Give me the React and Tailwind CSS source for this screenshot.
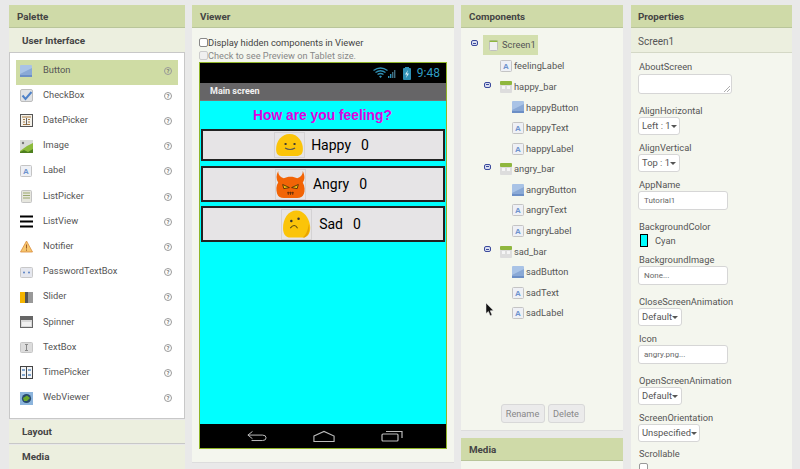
const paletteItems = ['Button', 'CheckBox', 'DatePicker', 'Image', 'Label', 'ListPicker', 'ListView', 'Notifier', 'PasswordTextBox', 'Slider', 'Spinner', 'TextBox', 'TimePicker', 'WebViewer'];

function PaletteIcon({ name }) {
  switch (name) {
    case 'Button':
      return <ButtonIcon />;
    case 'CheckBox':
      return (
        <svg width="13" height="13" viewBox="0 0 13 13">
          <rect x="0.5" y="0.5" width="12" height="12" rx="1.5" fill="#e0e2e4" stroke="#bcbcbc" />
          <path d="M2.5 6.5 L5.5 10 L11.5 3" fill="none" stroke="#4f82c8" strokeWidth="2" />
        </svg>
      );
    case 'DatePicker':
      return (
        <svg width="13" height="13" viewBox="0 0 13 13">
          <rect x="0.5" y="0.5" width="12" height="12" fill="#f4f1ea" stroke="#555" />
          <path d="M2 3h9M3 5.5h2M8 5.5h2M3 8h2M8 8h2M3 10.5h7" stroke="#a67a45" strokeWidth="1" />
          <path d="M6.5 4v7" stroke="#666" strokeWidth="1" />
        </svg>
      );
    case 'Image':
      return (
        <svg width="13" height="13" viewBox="0 0 13 13">
          <rect width="13" height="13" fill="#d8dbd8" />
          <circle cx="3" cy="3" r="1.2" fill="#777" />
          <path d="M0 11 L7 6 L13 3 V13 H0 Z" fill="#8dbb3c" />
          <path d="M0 12 L4 10 L8 12 L13 9 V13 H0 Z" fill="#4d7f1e" />
        </svg>
      );
    case 'Label':
      return <LabelIcon />;
    case 'ListPicker':
      return (
        <svg width="13" height="13" viewBox="0 0 13 13">
          <rect x="1.5" y="0.5" width="10" height="12" rx="1" fill="#e6e6de" stroke="#c4c4c4" />
          <path d="M3 3h7M3 5.5h7M3 8h7" stroke="#9ba86d" strokeWidth="1" />
        </svg>
      );
    case 'ListView':
      return (
        <svg width="13" height="13" viewBox="0 0 13 13">
          <path d="M0 1.5h13M0 6.5h13M0 11.5h13" stroke="#000" strokeWidth="2" />
        </svg>
      );
    case 'Notifier':
      return (
        <svg width="13" height="13" viewBox="0 0 13 13">
          <path d="M6.5 1 L12.5 12 H0.5 Z" fill="#f6c66e" stroke="#d98b3a" strokeWidth="0.8" />
          <path d="M6.5 4.5v4M6.5 9.5v1.2" stroke="#9c5a2a" strokeWidth="1" />
        </svg>
      );
    case 'PasswordTextBox':
      return (
        <svg width="13" height="11" viewBox="0 0 13 11">
          <rect x="0.5" y="0.5" width="12" height="10" rx="1" fill="#e5e7ee" stroke="#c8c8c8" />
          <circle cx="4" cy="5.5" r="1" fill="#5c83c4" />
          <circle cx="9" cy="5.5" r="1" fill="#5c83c4" />
        </svg>
      );
    case 'Slider':
      return (
        <svg width="13" height="11" viewBox="0 0 13 11">
          <rect width="5" height="11" fill="#f4b400" />
          <rect x="5" width="3" height="11" fill="#555" />
          <rect x="8" width="5" height="11" fill="#999" />
        </svg>
      );
    case 'Spinner':
      return (
        <svg width="13" height="12" viewBox="0 0 13 12">
          <rect x="0.5" y="0.5" width="12" height="11" fill="#d8d8d8" stroke="#666" />
          <rect x="1" y="1" width="11" height="3" fill="#666" />
          <rect x="2" y="6" width="9" height="4" fill="#f0f0f0" />
        </svg>
      );
    case 'TextBox':
      return (
        <svg width="13" height="11" viewBox="0 0 13 11">
          <rect x="0.5" y="0.5" width="12" height="10" rx="1" fill="#dcdcdc" stroke="#c6c6c6" />
          <path d="M5 2.5h3M5 8.5h3M6.5 2.5v6" stroke="#888" strokeWidth="1" fill="none" />
        </svg>
      );
    case 'TimePicker':
      return (
        <svg width="13" height="13" viewBox="0 0 13 13">
          <rect x="0.5" y="0.5" width="12" height="12" fill="#f2f4f6" stroke="#444" />
          <path d="M6.5 1v11" stroke="#444" />
          <path d="M2 4h3M8 4h3M2 9h3M8 9h3" stroke="#5b8ac0" strokeWidth="1.4" />
        </svg>
      );
    default:
      return (
        <svg width="13" height="13" viewBox="0 0 13 13">
          <rect width="13" height="13" fill="#8cb4dc" />
          <circle cx="6.5" cy="6.5" r="4.6" fill="#27496d" />
          <path d="M3 6 L7 3.5 L10 6 L7 9 L4 9 Z" fill="#6aa82c" />
        </svg>
      );
  }
}

function ButtonIcon() {
  return (
    <svg width="12" height="12" viewBox="0 0 12 12">
      <rect width="12" height="12" rx="1" fill="#a9c3e6" />
      <path d="M0 9 L12 3 V12 H0 Z" fill="#8aa9d6" />
      <rect y="10" width="12" height="2" fill="#6c8fc6" />
    </svg>
  );
}

function LabelIcon() {
  return (
    <svg width="12" height="12" viewBox="0 0 12 12">
      <rect x="0.5" y="0.5" width="11" height="11" rx="1" fill="#eef0f5" stroke="#c4c4c4" />
      <text x="6" y="9" textAnchor="middle" fontSize="8" fontWeight="700" fontFamily="Liberation Sans, sans-serif" fill="#6e93cd">A</text>
    </svg>
  );
}

function BarIcon() {
  return (
    <svg width="12" height="12" viewBox="0 0 12 12">
      <rect width="12" height="12" rx="1" fill="#dddddd" />
      <rect width="12" height="4" rx="1" fill="#8fb73e" />
      <rect x="2" y="5" width="3" height="3" fill="#f5f5f5" />
      <rect x="7" y="5" width="3" height="3" fill="#f5f5f5" />
    </svg>
  );
}

function HelpIcon() {
  return (
    <span className="flex h-[8px] w-[8px] items-center justify-center rounded-full border border-[#9a9a9a] text-[6px] leading-none font-bold text-[#777]">?</span>
  );
}

function Minus() {
  return (
    <span className="flex h-[6px] w-[7px] items-center justify-center rounded-[2px] border border-[#3b4a9c] bg-[#d9def0]">
      <span className="h-px w-[3px] bg-[#3b4a9c]" />
    </span>
  );
}

function Header({ title, pad = 'pl-[8px]' }) {
  return (
    <div className={`flex h-[23px] shrink-0 items-center border-b border-[#b9c59a] bg-[#cfdaa8] pt-[2px] text-[9.8px] font-bold text-[#444] ${pad}`}>{title}</div>
  );
}

function Palette() {
  return (
    <div className="flex h-[469px] w-[176px] shrink-0 flex-col">
      <Header title="Palette" />
      <div className="flex h-[25px] shrink-0 items-center border-b border-[#c8c8c8] bg-[#ecefdf] pl-[13px] pt-[3px] text-[9.9px] font-bold text-[#444]">User Interface</div>
      <div className="h-[366px] shrink-0 border-x border-b border-[#c8c8c8] bg-white px-[6px] pt-[7px]">
        {paletteItems.map((name, i) => (
          <div key={name} className={`flex h-[25.2px] items-center pb-[4px] ${i === 0 ? 'bg-[#cfdca4]' : ''}`}>
            <div className="flex w-[27px] shrink-0 justify-start pl-[4px]">
              <PaletteIcon name={name} />
            </div>
            <span className="flex-1 pb-[2px] text-[9.3px] text-[#555]">{name}</span>
            <div className="pr-[6px]">
              <HelpIcon />
            </div>
          </div>
        ))}
      </div>
      <div className="mt-[1px] flex h-[24px] shrink-0 items-center border-b border-[#c8c8c8] bg-[#ecefdf] pl-[13px] pt-[1px] text-[9.9px] font-bold text-[#444]">Layout</div>
      <div className="mt-[1px] flex h-[24px] shrink-0 items-center bg-[#ecefdf] pl-[13px] text-[9.9px] font-bold text-[#444]">Media</div>
    </div>
  );
}

function Happy() {
  return (
    <svg width="29" height="24" viewBox="0 0 26 24" preserveAspectRatio="none">
      <path d="M13 1 C21 1 25 9 25 16 C25 21 23 23 19 23 H6 C2 23 1 20 1 16 C1 8 6 1 13 1 Z" fill="#fbc409" />
      <circle cx="9.5" cy="11" r="1.1" fill="#333" />
      <circle cx="17.5" cy="11" r="1.1" fill="#333" />
      <path d="M9 15 Q13.5 18 18 15" fill="none" stroke="#555" strokeWidth="1" />
    </svg>
  );
}

function Angry() {
  return (
    <svg width="30" height="29" viewBox="0 0 26 28" preserveAspectRatio="none">
      <path d="M2 1 C2 5 4 7 7 8 C10 6 16 6 19 8 C22 7 24 5 24 1 C26 6 26 9 24 12 C26 16 26 20 25 23 C24 26 22 27 19 27 H7 C4 27 2 26 1 23 C0 19 0 15 2 12 C0 9 0 5 2 1 Z" fill="#f26406" />
      <path d="M6 14 L12 17 L7 18 Z M20 14 L14 17 L19 18 Z" fill="#f4c20d" stroke="#4a2a08" strokeWidth="0.8" />
      <path d="M10 22 H16 M11 21 V24 M13 21 V24 M15 21 V24" stroke="#5a2b08" strokeWidth="0.8" />
    </svg>
  );
}

function Sad() {
  return (
    <svg width="30" height="30" viewBox="0 0 28 28">
      <path d="M14 1 C21 1 26 8 27 15 C28 21 26 27 20 27 H8 C4 27 1 24 1 18 C1 9 6 1 14 1 Z" fill="#fbc409" />
      <path d="M26 14 C27 20 26 25 22 27 L20 27 C24 24 25 19 26 14 Z" fill="#e8a200" />
      <circle cx="9" cy="11" r="1.2" fill="#333" />
      <circle cx="16" cy="9" r="1.2" fill="#333" />
      <path d="M8 18 Q12 13 15 18" fill="none" stroke="#5a4a10" strokeWidth="1" />
    </svg>
  );
}

function EmojiRow({ name, emoji, rowClass, tileClass, labelGap }) {
  return (
    <div className={`flex items-center justify-center border-2 border-[#222] bg-[#e6e4e6] ${rowClass}`}>
      <div className={`flex w-[31px] items-center justify-center border border-[#d4d2d4] ${tileClass}`}>{emoji}</div>
      <span className={`text-[14px] text-black ${labelGap}`}>{name}</span>
      <span className="ml-[10px] text-[14px] text-black">0</span>
    </div>
  );
}

function Phone() {
  return (
    <div className="flex h-[387px] flex-col border border-[#90b528]">
      <div className="flex h-[20px] shrink-0 items-center justify-end gap-[6px] bg-black pr-[6px]">
        <svg width="24" height="12" viewBox="0 0 24 12">
          <path d="M0.5 3.5 Q7.5 -1.5 14.5 3.5 M2.5 5.5 Q7.5 2 12.5 5.5 M4.5 7.5 Q7.5 5.5 10.5 7.5" fill="none" stroke="#2f90b5" strokeWidth="1.3" />
          <path d="M6 9.5 L7.5 8.6 L9 9.5 L7.5 11 Z" fill="#2f90b5" />
          <path d="M15 11h1.4V9H15Z M17 11h1.4V7H17Z" fill="#2f90b5" />
          <path d="M19 11h1.4V5H19Z M21 11h1.4V3H21Z" fill="#3f6d80" />
        </svg>
        <svg width="8" height="13" viewBox="0 0 8 13">
          <rect y="1" width="8" height="12" rx="1" fill="#2f90b5" />
          <rect x="2" width="4" height="1" fill="#2f90b5" />
          <path d="M5 3 L2 7.5 H4 L3 11 L6 6.5 H4 Z" fill="#d6eef6" />
        </svg>
        <span className="text-[12px] text-[#2f9ec4]">9:48</span>
      </div>
      <div className="flex h-[18px] shrink-0 items-center border-b border-[#777] bg-[#666567] pl-[10px] pt-[1px] text-[9px] font-bold text-[#f2f2f2]">Main screen</div>
      <div className="flex flex-1 flex-col bg-[#00ffff] px-[1px]">
        <div className="flex h-[28px] shrink-0 items-center justify-center pr-[1px] pt-[2px] font-['Liberation_Sans',sans-serif] text-[13.8px] font-bold text-[#e000e0]">How are you feeling?</div>
        <EmojiRow name="Happy" emoji={<Happy />} rowClass="h-[32px] pr-[3px]" tileClass="h-[26px]" labelGap="ml-[6px]" />
        <EmojiRow name="Angry" emoji={<Angry />} rowClass="mt-[5px] h-[36px] pr-[4px]" tileClass="h-[31px]" labelGap="ml-[7px]" />
        <EmojiRow name="Sad" emoji={<Sad />} rowClass="mt-[4px] h-[36px] pr-[4px]" tileClass="h-[31px]" labelGap="ml-[7px]" />
      </div>
      <div className="flex h-[24px] shrink-0 items-center gap-[46px] bg-black pl-[47px]">
        <svg width="20" height="12" viewBox="0 0 22 12">
          <path d="M6 1 L1 5 L6 9 M1 5 H17 Q21 5 21 8 Q21 11 17 11 H5" fill="none" stroke="#bbb" strokeWidth="1.1" />
        </svg>
        <svg width="22" height="13" viewBox="0 0 24 13">
          <path d="M1 6 L12 1 L23 6 V12 H1 Z" fill="none" stroke="#bbb" strokeWidth="1.2" />
        </svg>
        <svg width="22" height="12" viewBox="0 0 22 12">
          <rect x="1" y="4" width="16" height="7" rx="1" fill="none" stroke="#bbb" strokeWidth="1.2" />
          <path d="M5 1.5 H21 V8" fill="none" stroke="#bbb" strokeWidth="1.2" />
        </svg>
      </div>
    </div>
  );
}

function Viewer() {
  return (
    <div className="flex h-[458px] w-[262px] shrink-0 flex-col border-b border-[#ddd] bg-[#f4f6ee]">
      <Header title="Viewer" />
      <div className="px-[7px] pt-[8px]">
        <div className="flex h-[13px] items-center text-[9.35px] text-[#444]">
          <span className="h-[9px] w-[9px] rounded-[2px] border border-[#888] bg-white" />
          Display hidden components in Viewer
        </div>
        <div className="flex h-[13px] items-center text-[9.2px] text-[#888]">
          <span className="h-[9px] w-[9px] rounded-[2px] border border-[#ccc] bg-[#f0f0f0]" />
          Check to see Preview on Tablet size.
        </div>
        <Phone />
      </div>
    </div>
  );
}

const treeRows = [
  { name: 'feelingLabel', icon: 'label', level: 1 },
  { name: 'happy_bar', icon: 'bar', level: 1, open: true },
  { name: 'happyButton', icon: 'button', level: 2 },
  { name: 'happyText', icon: 'label', level: 2 },
  { name: 'happyLabel', icon: 'label', level: 2 },
  { name: 'angry_bar', icon: 'bar', level: 1, open: true },
  { name: 'angryButton', icon: 'button', level: 2 },
  { name: 'angryText', icon: 'label', level: 2 },
  { name: 'angryLabel', icon: 'label', level: 2 },
  { name: 'sad_bar', icon: 'bar', level: 1, open: true },
  { name: 'sadButton', icon: 'button', level: 2 },
  { name: 'sadText', icon: 'label', level: 2 },
  { name: 'sadLabel', icon: 'label', level: 2 },
];

function Components() {
  return (
    <div className="mr-[1px] flex w-[162px] shrink-0 flex-col">
      <div className="relative flex h-[426px] flex-col border-b border-[#ddd] bg-[#f4f6ee]">
        <Header title="Components" />
        <div className="mt-[7px] mb-[1px] flex h-[20px] items-center pl-[10px]">
          <span className="mb-[4px]">
            <Minus />
          </span>
          <div className="ml-[5px] flex h-[20px] w-[55px] items-center bg-[#d3dfae] pl-[6px]">
            <svg width="9" height="11" viewBox="0 0 9 11">
              <rect x="0.5" y="0.5" width="8" height="10" rx="1" fill="#f0f0f0" stroke="#c0c0c0" />
              <rect x="0.5" y="0.5" width="8" height="1.5" fill="#8fb73e" />
            </svg>
            <span className="ml-[4px] text-[9.3px] text-[#555]">Screen1</span>
          </div>
        </div>
        {treeRows.map((row) => (
          <div key={row.name} className={`relative flex h-[20.6px] items-center ${row.level === 1 ? 'pl-[39px]' : 'pl-[51px]'}`}>
            {row.open && (
              <span className="absolute left-[23px] top-[5px]">
                <Minus />
              </span>
            )}
            {row.icon === 'label' && <LabelIcon />}
            {row.icon === 'bar' && <BarIcon />}
            {row.icon === 'button' && <ButtonIcon />}
            <span className="ml-[2px] text-[9.3px] text-[#555]">{row.name}</span>
          </div>
        ))}
        <div className="mt-auto mb-[7px] flex justify-center gap-[3px] pl-[1px]">
          <div className="flex h-[19px] w-[44px] items-center justify-center rounded-[3px] border border-[#d8d8d8] bg-[#ebebeb] text-[9.2px] text-[#888]">Rename</div>
          <div className="flex h-[19px] w-[37px] items-center justify-center rounded-[3px] border border-[#d8d8d8] bg-[#ebebeb] text-[9.2px] text-[#888]">Delete</div>
        </div>
        <svg className="absolute left-[24px] top-[298px]" width="10" height="14" viewBox="0 0 10 14">
          <path d="M1 0 V10.5 L3.4 8.4 L5.2 12.8 L7 12 L5.2 7.8 L8.4 7.6 Z" fill="#111" stroke="#eee" strokeWidth="0.5" />
        </svg>
      </div>
      <div className="mt-[7px] h-[31px] bg-[#f4f6ee]">
        <Header title="Media" />
      </div>
    </div>
  );
}

function Prop({ label, children, mb }) {
  return (
    <div className={mb}>
      <div className="h-[13px] pl-[1px] text-[9.3px] leading-[14px] text-[#555]">{label}</div>
      {children}
    </div>
  );
}

function Select({ value, w }) {
  return (
    <div className={`flex h-[18px] items-center justify-between rounded-[3px] border border-[#d6d6d6] bg-white pl-[3px] pr-[3px] text-[9.4px] whitespace-nowrap text-[#555] ${w}`}>
      {value}
      <span className="h-0 w-0 border-x-[3px] border-t-[3px] border-x-transparent border-t-[#555]" />
    </div>
  );
}

function TextField({ value }) {
  return (
    <div className="flex h-[19px] w-[90px] items-center rounded-[3px] border border-[#d6d6d6] bg-white pl-[5px] text-[8px] text-[#666]">{value}</div>
  );
}

function Properties() {
  return (
    <div className="flex h-[469px] w-[161px] shrink-0 flex-col overflow-hidden bg-[#f4f6ee]">
      <Header title="Properties" pad="pl-[7px]" />
      <div className="flex h-[25px] shrink-0 items-center border-b border-[#d4d8c6] bg-[#ecefdf] pl-[7px] pt-[2px] text-[10px] text-[#555]">Screen1</div>
      <div className="pl-[7px] pt-[7px]">
        <Prop label="AboutScreen" mb="mb-[10px]">
          <div className="relative mt-[1px] h-[20px] w-[94px] rounded-[3px] border border-[#d6d6d6] bg-white">
            <svg className="absolute right-[1px] bottom-[1px]" width="6" height="6" viewBox="0 0 6 6">
              <path d="M0 6 L6 0 M3 6 L6 3" stroke="#999" strokeWidth="0.8" />
            </svg>
          </div>
        </Prop>
        <Prop label="AlignHorizontal" mb="mb-[6px]"><Select value="Left : 1" w="w-[42px]" /></Prop>
        <Prop label="AlignVertical" mb="mb-[6px]"><Select value="Top : 1" w="w-[42px]" /></Prop>
        <Prop label="AppName" mb="mb-[10px]"><TextField value="Tutorial1" /></Prop>
        <Prop label="BackgroundColor" mb="mb-[6px]">
          <div className="mt-[1px] flex h-[13px] items-center">
            <span className="ml-[2px] h-[13px] w-[8px] border border-black bg-[#00ffff]" />
            <span className="ml-[7px] text-[9.3px] text-[#555]">Cyan</span>
          </div>
        </Prop>
        <Prop label="BackgroundImage" mb="mb-[10px]"><TextField value="None..." /></Prop>
        <Prop label="CloseScreenAnimation" mb="mb-[6px]"><Select value="Default" w="w-[44px]" /></Prop>
        <Prop label="Icon" mb="mb-[10px]"><TextField value="angry.png..." /></Prop>
        <Prop label="OpenScreenAnimation" mb="mb-[6px]"><Select value="Default" w="w-[44px]" /></Prop>
        <Prop label="ScreenOrientation" mb="mb-[5px]"><Select value="Unspecified" w="w-[62px]" /></Prop>
        <Prop label="Scrollable" mb="">
          <span className="mt-[3px] ml-[1px] block h-[10px] w-[9px] rounded-[2px] border border-[#999] bg-white" />
        </Prop>
      </div>
    </div>
  );
}

export default function App() {
  return (
    <div className="flex h-[469px] w-[800px] gap-[7px] overflow-hidden bg-[#e9e9e9] pl-[9px] pt-[5px] font-['Roboto',sans-serif]">
      <Palette />
      <Viewer />
      <Components />
      <Properties />
    </div>
  );
}
